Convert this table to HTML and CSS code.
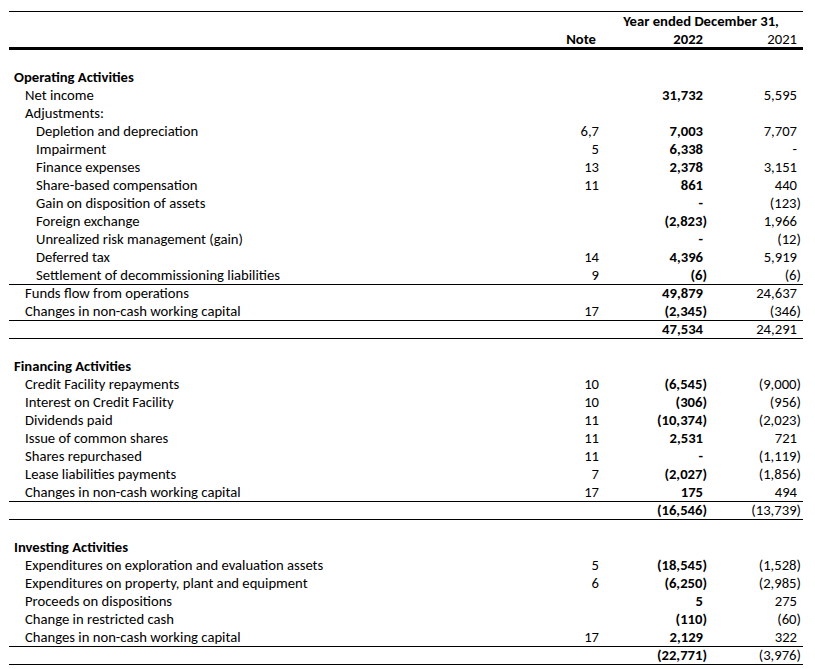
FILE: index.html
```html
<!DOCTYPE html>
<html>
<head>
<meta charset="utf-8">
<link rel="stylesheet" href="styles.css">
</head>
<body>
<div class="sheet">
  <div class="head">
    <div class="row h1"><span></span><span class="span2">Year ended December 31,</span></div>
    <div class="row h2"><span></span><span class="note b hn">Note</span><span class="v b">2022</span><span class="w">2021</span></div>
  </div>
  <div class="gap"></div>

  <div class="row"><span class="lbl sec">Operating Activities</span></div>
  <div class="row"><span class="lbl l1">Net income</span><span class="note"></span><span class="v b">31,732</span><span class="w">5,595</span></div>
  <div class="row"><span class="lbl l1">Adjustments:</span></div>
  <div class="row"><span class="lbl l2">Depletion and depreciation</span><span class="note">6,7</span><span class="v b">7,003</span><span class="w">7,707</span></div>
  <div class="row"><span class="lbl l2">Impairment</span><span class="note">5</span><span class="v b">6,338</span><span class="w">-</span></div>
  <div class="row"><span class="lbl l2">Finance expenses</span><span class="note">13</span><span class="v b">2,378</span><span class="w">3,151</span></div>
  <div class="row"><span class="lbl l2">Share-based compensation</span><span class="note">11</span><span class="v b">861</span><span class="w">440</span></div>
  <div class="row"><span class="lbl l2">Gain on disposition of assets</span><span class="note"></span><span class="v b">-</span><span class="w n">(123)</span></div>
  <div class="row"><span class="lbl l2">Foreign exchange</span><span class="note"></span><span class="v b n">(2,823)</span><span class="w">1,966</span></div>
  <div class="row"><span class="lbl l2">Unrealized risk management (gain)</span><span class="note"></span><span class="v b">-</span><span class="w n">(12)</span></div>
  <div class="row"><span class="lbl l2">Deferred tax</span><span class="note">14</span><span class="v b">4,396</span><span class="w">5,919</span></div>
  <div class="row rule"><span class="lbl l2">Settlement of decommissioning liabilities</span><span class="note">9</span><span class="v b n">(6)</span><span class="w n">(6)</span></div>
  <div class="row"><span class="lbl l1">Funds flow from operations</span><span class="note"></span><span class="v b">49,879</span><span class="w">24,637</span></div>
  <div class="row rule"><span class="lbl l1">Changes in non-cash working capital</span><span class="note">17</span><span class="v b n">(2,345)</span><span class="w n">(346)</span></div>
  <div class="row rule"><span class="lbl"></span><span class="note"></span><span class="v b">47,534</span><span class="w">24,291</span></div>
  <div class="gap"></div>

  <div class="row"><span class="lbl sec">Financing Activities</span></div>
  <div class="row"><span class="lbl l1">Credit Facility repayments</span><span class="note">10</span><span class="v b n">(6,545)</span><span class="w n">(9,000)</span></div>
  <div class="row"><span class="lbl l1">Interest on Credit Facility</span><span class="note">10</span><span class="v b n">(306)</span><span class="w n">(956)</span></div>
  <div class="row"><span class="lbl l1">Dividends paid</span><span class="note">11</span><span class="v b n">(10,374)</span><span class="w n">(2,023)</span></div>
  <div class="row"><span class="lbl l1">Issue of common shares</span><span class="note">11</span><span class="v b">2,531</span><span class="w">721</span></div>
  <div class="row"><span class="lbl l1">Shares repurchased</span><span class="note">11</span><span class="v b">-</span><span class="w n">(1,119)</span></div>
  <div class="row"><span class="lbl l1">Lease liabilities payments</span><span class="note">7</span><span class="v b n">(2,027)</span><span class="w n">(1,856)</span></div>
  <div class="row rule"><span class="lbl l1">Changes in non-cash working capital</span><span class="note">17</span><span class="v b">175</span><span class="w">494</span></div>
  <div class="row rule"><span class="lbl"></span><span class="note"></span><span class="v b n">(16,546)</span><span class="w n">(13,739)</span></div>
  <div class="gap"></div>

  <div class="row"><span class="lbl sec">Investing Activities</span></div>
  <div class="row"><span class="lbl l1">Expenditures on exploration and evaluation assets</span><span class="note">5</span><span class="v b n">(18,545)</span><span class="w n">(1,528)</span></div>
  <div class="row"><span class="lbl l1">Expenditures on property, plant and equipment</span><span class="note">6</span><span class="v b n">(6,250)</span><span class="w n">(2,985)</span></div>
  <div class="row"><span class="lbl l1">Proceeds on dispositions</span><span class="note"></span><span class="v b">5</span><span class="w">275</span></div>
  <div class="row"><span class="lbl l1">Change in restricted cash</span><span class="note"></span><span class="v b n">(110)</span><span class="w n">(60)</span></div>
  <div class="row rule"><span class="lbl l1">Changes in non-cash working capital</span><span class="note">17</span><span class="v b">2,129</span><span class="w">322</span></div>
  <div class="row rule"><span class="lbl"></span><span class="note"></span><span class="v b n">(22,771)</span><span class="w n">(3,976)</span></div>
</div>
</body>
</html>
```
FILE: styles.css
```css
html, body {
  margin: 0;
  padding: 0;
  background: #fff;
}
body {
  font-family: "Carlito", "Open Sans", "Liberation Sans", sans-serif;
  font-size: 14.67px;
  color: #000;
}
.sheet {
  width: 794px;
  margin: 11px 0 0 9px;
}
.head {
  border-top: 1px solid #000;
}
.row {
  display: grid;
  grid-template-columns: 531px 59px 108px 94px 2px;
  height: 18px;
  line-height: 16px;
  box-sizing: border-box;
  white-space: nowrap;
}
.row.h1 {
  height: 19px;
  line-height: 19px;
}
.row.h2 {
  height: 19px;
  line-height: 16px;
  border-bottom: 3px solid #000;
}
.row.rule {
  border-bottom: 1px solid #000;
  line-height: 16px;
}
.span2 {
  grid-column: 3 / 6;
  text-align: center;
  font-weight: bold;
}
.gap {
  height: 19px;
}
.lbl.sec { padding-left: 5px; font-weight: bold; }
.lbl.l1 { padding-left: 16px; }
.lbl.l2 { padding-left: 27px; }
.note { text-align: right; }
.note.hn { padding-right: 3px; }
.v, .w {
  text-align: right;
  padding-right: 4px;
}
.v.n, .w.n { padding-right: 0; }
.b { font-weight: bold; }
```
